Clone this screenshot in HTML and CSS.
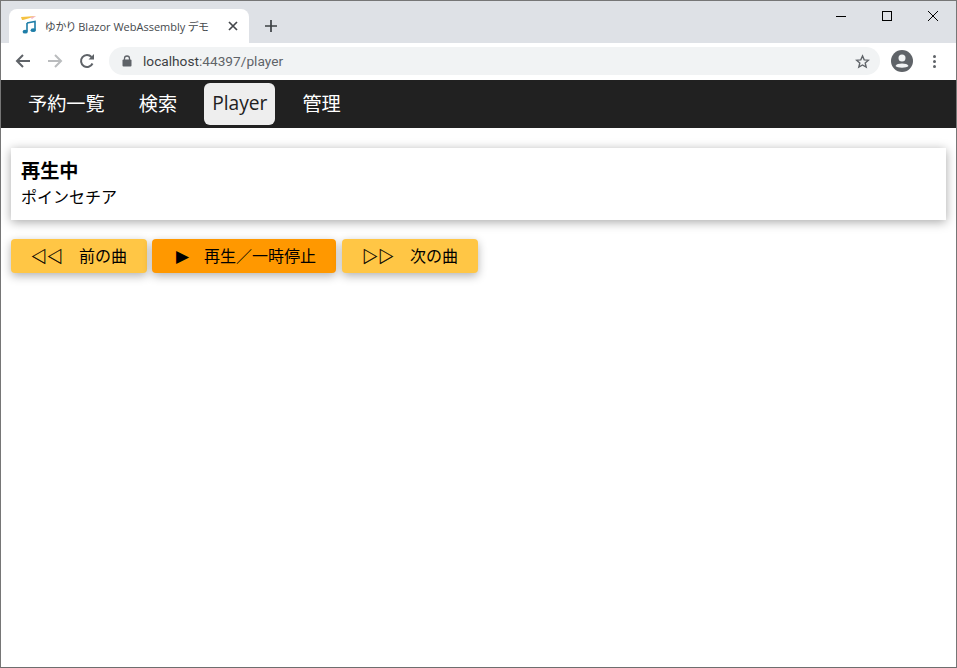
FILE: index.html
```html
<!DOCTYPE html>
<html lang="ja">
<head>
<meta charset="UTF-8">
<meta name="viewport" content="width=device-width, initial-scale=1.0">
<title>ゆかり Blazor WebAssembly デモ</title>
<link rel="stylesheet" href="styles.css">
</head>
<body>
<div class="window">
    <div class="tabstrip">
        <div class="tab">
            <svg class="favicon" width="16" height="18" viewBox="0 0 16 18">
                <path d="M0 1 L15 0 L9 2 L2 4 L1 4 Z" fill="#f5c242"/>
                <path d="M9 1 L15 0 L11 3 Z" fill="#f3b6c4"/>
                <path d="M6 7 L14 5.500 V14" fill="none" stroke="#1f7ea8" stroke-width="1.600"/>
                <path d="M6 7 V15.500" fill="none" stroke="#1f7ea8" stroke-width="1.600"/>
                <ellipse cx="4.200" cy="15.700" rx="2.600" ry="1.900" fill="#1f7ea8"/>
                <ellipse cx="12.200" cy="14.200" rx="2.600" ry="1.900" fill="#1f7ea8"/>
            </svg>
            <span class="tab-title">ゆかり Blazor WebAssembly デモ</span>
            <svg class="tab-close" width="10" height="10" viewBox="0 0 10 10">
                <path d="M1 1 L9 9 M9 1 L1 9" stroke="#44474b" stroke-width="1.700"/>
            </svg>
        </div>
        <svg class="new-tab" width="12" height="12" viewBox="0 0 12 12">
            <path d="M6 0 V12 M0 6 H12" stroke="#3c4043" stroke-width="1.700"/>
        </svg>
        <div class="win-controls">
            <svg width="10" height="10" viewBox="0 0 10 10"><path d="M0 5.500 H10" stroke="#000" stroke-width="1"/></svg>
            <svg width="10" height="10" viewBox="0 0 10 10"><rect x="0.500" y="0.500" width="9" height="9" fill="none" stroke="#000" stroke-width="1"/></svg>
            <svg width="10" height="10" viewBox="0 0 10 10"><path d="M0 0 L10 10 M10 0 L0 10" stroke="#000" stroke-width="1"/></svg>
        </div>
    </div>

    <div class="toolbar">
        <svg class="tool-icon" width="16" height="16" viewBox="0 0 16 16">
            <path d="M15 8 H2 M8 2 L2 8 L8 14" fill="none" stroke="#5f6368" stroke-width="2"/>
        </svg>
        <svg class="tool-icon" width="16" height="16" viewBox="0 0 16 16">
            <path d="M1 8 H14 M8 2 L14 8 L8 14" fill="none" stroke="#babcbe" stroke-width="2"/>
        </svg>
        <svg class="tool-icon" width="16" height="16" viewBox="0 0 16 16">
            <path d="M13.500 10.500 A6 6 0 1 1 12.500 4" fill="none" stroke="#5f6368" stroke-width="2"/>
            <path d="M9.500 6.500 H15 V1 Z" fill="#5f6368"/>
        </svg>
        <div class="omnibox">
            <svg class="lock" width="10" height="12" viewBox="0 0 10 12">
                <path d="M2.500 5 V3.500 a2.500 2.500 0 0 1 5 0 V5" fill="none" stroke="#5f6368" stroke-width="1.300"/>
                <rect x="0.500" y="4.500" width="9" height="7" rx="1" fill="#5f6368"/>
            </svg>
            <span class="url"><span class="host">localhost</span>:44397/player</span>
            <svg class="star" width="15" height="15" viewBox="0 0 24 24">
                <path d="M12 3 L14.700 9.300 L21.500 9.900 L16.300 14.400 L17.900 21 L12 17.500 L6.100 21 L7.700 14.400 L2.500 9.900 L9.300 9.300 Z" fill="none" stroke="#5f6368" stroke-width="2.200"/>
            </svg>
        </div>
        <svg class="avatar" width="22" height="22" viewBox="0 0 22 22">
            <circle cx="11" cy="11" r="11" fill="#5f6368"/>
            <circle cx="11" cy="8" r="3.500" fill="#f1f3f4"/>
            <path d="M4.500 16 C6 12.800 16 12.800 17.500 16 C15.500 18.300 6.500 18.300 4.500 16 Z" fill="#f1f3f4"/>
        </svg>
        <div class="menu-dots"><i></i><i></i><i></i></div>
    </div>

    <nav class="navbar">
        <a class="nav-item">予約一覧</a>
        <a class="nav-item">検索</a>
        <a class="nav-item active">Player</a>
        <a class="nav-item">管理</a>
    </nav>

    <main class="content">
        <div class="card">
            <div class="card-title">再生中</div>
            <div class="card-text">ポインセチア</div>
        </div>
        <div class="buttons">
            <button class="btn btn-prev"><span class="btn-icon">◁◁</span><span class="btn-label">前の曲</span></button>
            <button class="btn btn-play"><span class="btn-play-icon">▶</span><span class="btn-label">再生／一時停止</span></button>
            <button class="btn btn-next"><span class="btn-icon">▷▷</span><span class="btn-label">次の曲</span></button>
        </div>
    </main>
</div>
</body>
</html>
```

FILE: styles.css
```css
html, body {
    margin: 0;
    padding: 0;
    height: 100%;
}
body {
    font-family: "Open Sans", "Noto Sans CJK JP", sans-serif;
    background-color: #fff;
    color: #000;
    overflow: hidden;
}
.window {
    box-sizing: border-box;
    height: 668px;
    display: flex;
    flex-direction: column;
    border: 1px solid #767676;
    border-bottom-color: #6e6e6e;
}
.tabstrip {
    height: 42px;
    flex: none;
    display: flex;
    align-items: flex-end;
    background-color: #dee1e6;
    padding-left: 8px;
}
.tab {
    width: 240px;
    height: 34px;
    box-sizing: border-box;
    padding: 0 11px 0 12px;
    display: flex;
    align-items: center;
    background-color: #fff;
    border-radius: 8px 8px 0 0;
}
.favicon {
    flex: none;
    margin-top: -2px;
}
.tab-title {
    margin-left: 8px;
    font-size: 11px;
    font-feature-settings: "palt";
    color: #45494d;
    white-space: nowrap;
    flex: 1;
    font-family: "Open Sans", "Noto Sans CJK JP", sans-serif;
}
.tab-close {
    flex: none;
    margin-left: 8px;
}
.new-tab {
    margin: 0 0 11px 16px;
}
.win-controls {
    margin-left: auto;
    align-self: flex-start;
    display: flex;
    gap: 36px;
    padding: 10px 18px 0 0;
}
.toolbar {
    height: 37px;
    flex: none;
    box-sizing: border-box;
    display: flex;
    align-items: center;
    background-color: #fff;
    padding: 0 0 1px 14px;
}
.tool-icon {
    flex: none;
    margin-right: 16px;
}
.omnibox {
    width: 771px;
    height: 28px;
    box-sizing: border-box;
    margin-left: -2px;
    padding: 0 10px 0 13px;
    display: flex;
    align-items: center;
    background-color: #f1f3f4;
    border-radius: 14px;
}
.lock {
    flex: none;
}
.url {
    margin-left: 11px;
    font-size: 13.700px;
    color: #5f6368;
    font-family: Roboto, sans-serif;
    flex: 1;
}
.host {
    color: #3c4043;
}
.star {
    flex: none;
}
.avatar {
    flex: none;
    margin-left: 11px;
}
.menu-dots {
    margin-left: 20px;
    display: flex;
    flex-direction: column;
    gap: 2px;
}
.menu-dots i {
    width: 3px;
    height: 3px;
    border-radius: 50%;
    background-color: #5f6368;
}
.navbar {
    height: 48px;
    flex: none;
    display: flex;
    align-items: center;
    gap: 18px;
    padding-left: 19px;
    background-color: #212121;
}
.nav-item {
    height: 42px;
    box-sizing: border-box;
    padding: 0 8px 3px;
    display: flex;
    align-items: center;
    font-size: 19.200px;
    color: #fff;
    border-radius: 6px;
}
.nav-item.active {
    margin: 0 1px;
    background-color: #eee;
    color: #212121;
}
.content {
    flex: 1;
    padding: 20px 10px 0;
    background-color: #fff;
}
.card {
    height: 72px;
    box-sizing: border-box;
    padding: 10px;
    background-color: #fff;
    box-shadow: 0 2px 10px rgba(0, 0, 0, 0.35);
}
.card-title {
    font-size: 19.200px;
    font-weight: bold;
    line-height: 26px;
}
.card-text {
    font-size: 16px;
    line-height: 26px;
}
.buttons {
    margin-top: 19px;
    display: flex;
    gap: 5px;
}
.btn {
    height: 34px;
    padding: 0 0 2px;
    border: none;
    border-radius: 4px;
    font-family: inherit;
    font-size: 16px;
    color: #000;
    box-shadow: 0 3px 10px rgba(0, 0, 0, 0.3);
    cursor: pointer;
}
.btn-prev,
.btn-next {
    width: 136px;
    background-color: #ffc645;
}
.btn-play {
    width: 184px;
    background-color: #ff9800;
}
.btn-next {
    margin-left: 1px;
}
.btn-icon {
    -webkit-text-stroke: 0.300px #000;
}
.btn-play-icon {
    margin-left: 4px;
    font-family: "DejaVu Sans", sans-serif;
    font-size: 17px;
    line-height: 1;
}
.btn-label {
    margin-left: 16px;
}
.btn-play .btn-label {
    margin-left: 15px;
}
```
